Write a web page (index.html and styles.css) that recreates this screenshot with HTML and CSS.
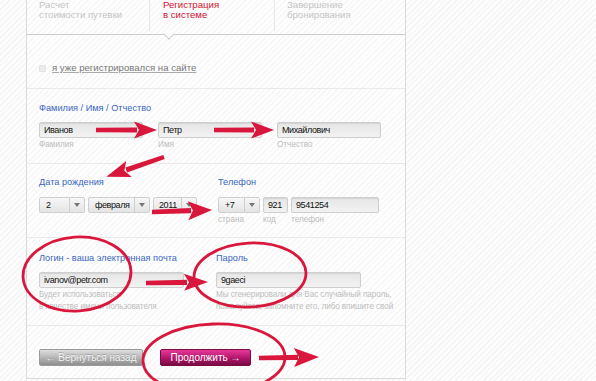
FILE: index.html
```html
<!DOCTYPE html>
<html lang="ru">
<head>
<meta charset="utf-8">
<title>Регистрация в системе</title>
<link rel="stylesheet" href="styles.css">
</head>
<body>
<div class="page">
  <div class="card">
    <div class="tabs">
      <div class="tab">Расчет<br>стоимости путевки</div>
      <div class="tab active">Регистрация<br>в системе</div>
      <div class="tab">Завершение<br>бронирования</div>
    </div>
    <div class="notch"></div>

    <div class="sec sec-check">
      <label class="check"><span class="box"></span><span class="check-text">я уже регистрировался на сайте</span></label>
    </div>

    <div class="sec sec-name">
      <div class="label">Фамилия / Имя / Отчество</div>
      <div class="row-name">
        <div class="field"><div class="input">Иванов</div><div class="sub">Фамилия</div></div>
        <div class="field"><div class="input">Петр</div><div class="sub">Имя</div></div>
        <div class="field"><div class="input">Михайлович</div><div class="sub">Отчество</div></div>
      </div>
    </div>

    <div class="sec sec-date">
      <div class="col-date">
        <div class="label">Дата рождения</div>
        <div class="selects">
          <div class="select s-day"><span class="val">2</span><span class="arr"></span></div>
          <div class="select s-month"><span class="val">февраля</span><span class="arr"></span></div>
          <div class="select s-year"><span class="val">2011</span><span class="arr"></span></div>
        </div>
      </div>
      <div class="col-phone">
        <div class="label">Телефон</div>
        <div class="phone">
          <div class="field"><div class="select s-country"><span class="val">+7</span><span class="arr"></span></div><div class="sub">страна</div></div>
          <div class="field"><div class="input i-code">921</div><div class="sub">код</div></div>
          <div class="field"><div class="input i-tel">9541254</div><div class="sub">телефон</div></div>
        </div>
      </div>
    </div>

    <div class="sec sec-login">
      <div class="col-login">
        <div class="label">Логин - ваша электронная почта</div>
        <div class="input i-wide">ivanov@petr.com</div>
        <div class="help">Будет использоваться<br>в качестве имени пользователя</div>
      </div>
      <div class="col-pass">
        <div class="label">Пароль</div>
        <div class="input i-wide">9gaeci</div>
        <div class="help">Мы сгенерировали для Вас случайный пароль,<br>пожалуйста, запомните его, либо впишите свой</div>
      </div>
    </div>

    <div class="sec sec-buttons">
      <button class="btn btn-back">← Вернуться назад</button>
      <button class="btn btn-next">Продолжить →</button>
    </div>
  </div>

  <svg class="marks" width="596" height="381" viewBox="0 0 596 381">
    <g fill="#d9163c">
      <g transform="translate(96,130)">
        <polygon points="0,-2.2 41,-2.6 41,2.6 0,2.2"/>
        <polygon points="38,-8.5 61,0 38,8.5 43,0"/>
      </g>
      <g transform="translate(214,130)">
        <polygon points="0,-2.2 40,-2.6 40,2.6 0,2.2"/>
        <polygon points="37,-8.5 60,0 37,8.5 42,0"/>
      </g>
      <g transform="translate(164,157) rotate(161)">
        <polygon points="0,-2.2 40,-2.6 40,2.6 0,2.2"/>
        <polygon points="37,-8.5 61,0 37,8.5 42,0"/>
      </g>
      <g transform="translate(152,212) rotate(-2)">
        <polygon points="0,-2.2 39,-2.6 39,2.6 0,2.2"/>
        <polygon points="36,-9.5 60,0 36,9.5 41,0"/>
      </g>
      <g transform="translate(146,283) rotate(-1)">
        <polygon points="0,-2.2 41,-2.6 41,2.6 0,2.2"/>
        <polygon points="38,-8.5 62,0 38,8.5 43,0"/>
      </g>
      <g transform="translate(259,358) rotate(-1)">
        <polygon points="0,-2.2 39,-2.6 39,2.6 0,2.2"/>
        <polygon points="35,-9.5 60,0 35,9.5 40,0"/>
      </g>
    </g>
    <g fill="none" stroke="#d9163c" stroke-width="2.8">
      <ellipse cx="77" cy="274" rx="54" ry="37" transform="rotate(-4 77 274)"/>
      <ellipse cx="250" cy="275" rx="56" ry="32" transform="rotate(-3 250 275)"/>
      <ellipse cx="214" cy="359" rx="71" ry="35" transform="rotate(-2 214 359)"/>
    </g>
  </svg>
</div>
</body>
</html>
```

FILE: styles.css
```css
* { box-sizing: border-box; }

html, body {
  margin: 0;
  padding: 0;
}

body {
  font-family: "Liberation Sans", Arial, sans-serif;
  background: repeating-linear-gradient(135deg, #fefefe 0 2px, #f6f6f6 2px 4px);
  color: #333;
}

.page {
  position: relative;
  height: 381px;
  overflow: hidden;
  padding-left: 26px;
}

.card {
  position: relative;
  width: 380px;
  border: 1px solid #d9d9d9;
  border-top: 0;
  background: repeating-linear-gradient(135deg, #ffffff 0 2px, #f8f8f8 2px 4px);
}

/* tabs */
.tabs {
  display: grid;
  grid-template-columns: 122px 125px 1fr;
  height: 35px;
  border-bottom: 1px solid #cccccc;
}

.tab {
  height: 31px;
  padding-left: 12px;
  font-size: 9.6px;
  line-height: 10px;
  color: #c4c4c4;
}

.tab + .tab {
  border-left: 1px solid #e6e6e6;
}

.tab.active {
  padding-left: 13px;
  color: #d3112e;
}

.notch {
  position: absolute;
  left: 138px;
  top: 30px;
  width: 8px;
  height: 8px;
  background: #fcfcfc;
  border-right: 1px solid #cccccc;
  border-bottom: 1px solid #cccccc;
  transform: rotate(45deg);
}

/* sections */
.sec {
  border-bottom: 1px solid #e9e9e9;
  padding-left: 12px;
  padding-right: 12px;
}

.label {
  font-size: 9.2px;
  line-height: 12px;
  color: #3a67c0;
}

.sub {
  margin-top: 1px;
  font-size: 8.2px;
  line-height: 11px;
  color: #bdbdbd;
}

.input {
  height: 16px;
  padding-left: 4px;
  border: 1px solid #cfcfcf;
  border-radius: 2px;
  background: linear-gradient(#e6e6e6, #f2f2f2);
  box-shadow: inset 0 1px 1px rgba(0, 0, 0, 0.08);
  font-size: 9px;
  letter-spacing: -0.4px;
  line-height: 14px;
  color: #111;
}

.select {
  display: flex;
  height: 16px;
  border: 1px solid #cfcfcf;
  border-radius: 2px;
  background: linear-gradient(#f7f7f7, #e4e4e4);
  font-size: 9px;
  letter-spacing: -0.4px;
  line-height: 14px;
  color: #111;
}

.select .val {
  flex: 1;
  padding-left: 6px;
}

.select .arr {
  position: relative;
  width: 15px;
  border-left: 1px solid #cfcfcf;
}

.select .arr::after {
  content: "";
  position: absolute;
  left: 4px;
  top: 5px;
  border-left: 3.5px solid transparent;
  border-right: 3.5px solid transparent;
  border-top: 4px solid #777;
}

/* checkbox */
.sec-check {
  height: 54px;
  padding-top: 27px;
}

.check {
  display: flex;
  align-items: center;
  gap: 6px;
  font-size: 9.6px;
  line-height: 12px;
  color: #777;
}

.box {
  width: 7px;
  height: 7px;
  margin-top: 1px;
  border: 1px solid #e4e4e4;
  border-radius: 1px;
  background: #ececec;
}

.check-text {
  text-decoration: underline;
  text-decoration-color: #aaa;
  text-underline-offset: 1px;
}

/* name */
.sec-name {
  padding-top: 13px;
  padding-bottom: 13px;
}

.sec-name .label {
  margin-bottom: 8px;
}

.row-name {
  display: grid;
  grid-template-columns: repeat(3, 104px);
  gap: 15px;
}

/* date & phone */
.sec-date {
  display: grid;
  grid-template-columns: 179px 1fr;
  padding-top: 12px;
  padding-bottom: 12px;
}

.sec-date .label {
  margin-bottom: 9px;
}

.selects {
  display: flex;
  gap: 3px;
}

.s-day { width: 46px; }
.s-month { width: 62px; }
.s-year { width: 44px; }
.s-country { width: 42px; }
.i-code { width: 25px; }
.i-tel { width: 88px; }

.s-year .val { padding-left: 5px; }
.s-country .val { padding-left: 6px; }

.phone {
  display: flex;
  gap: 3px;
}

/* login */
.sec-login {
  display: grid;
  grid-template-columns: 177px 1fr;
  padding-top: 14px;
  padding-bottom: 12px;
}

.sec-login .label {
  margin-bottom: 8px;
}

.i-wide {
  width: 145px;
}

.help {
  margin-top: 1px;
  font-size: 8.2px;
  letter-spacing: -0.1px;
  line-height: 12px;
  color: #bdbdbd;
  white-space: nowrap;
}

/* buttons */
.sec-buttons {
  display: flex;
  gap: 17px;
  padding-top: 23px;
  padding-bottom: 12px;
  border-bottom: 0;
}

.btn {
  height: 17px;
  padding: 0;
  border-radius: 2px;
  font-family: "Liberation Sans", Arial, sans-serif;
  font-size: 10px;
  line-height: 15px;
  text-align: center;
  cursor: pointer;
}

.btn-back {
  width: 104px;
  border: 1px solid #9a9a9a;
  background: linear-gradient(#dedede, #8e8e8e);
  color: #f2f2f2;
  text-shadow: 0 -1px 0 rgba(0, 0, 0, 0.2);
}

.btn-next {
  width: 91px;
  border: 1px solid #7a0a40;
  background: linear-gradient(#e8399a, #b0156a 55%, #7a0b43);
  color: #ffffff;
}

/* annotations */
.marks {
  position: absolute;
  left: 0;
  top: 0;
  pointer-events: none;
}
```
